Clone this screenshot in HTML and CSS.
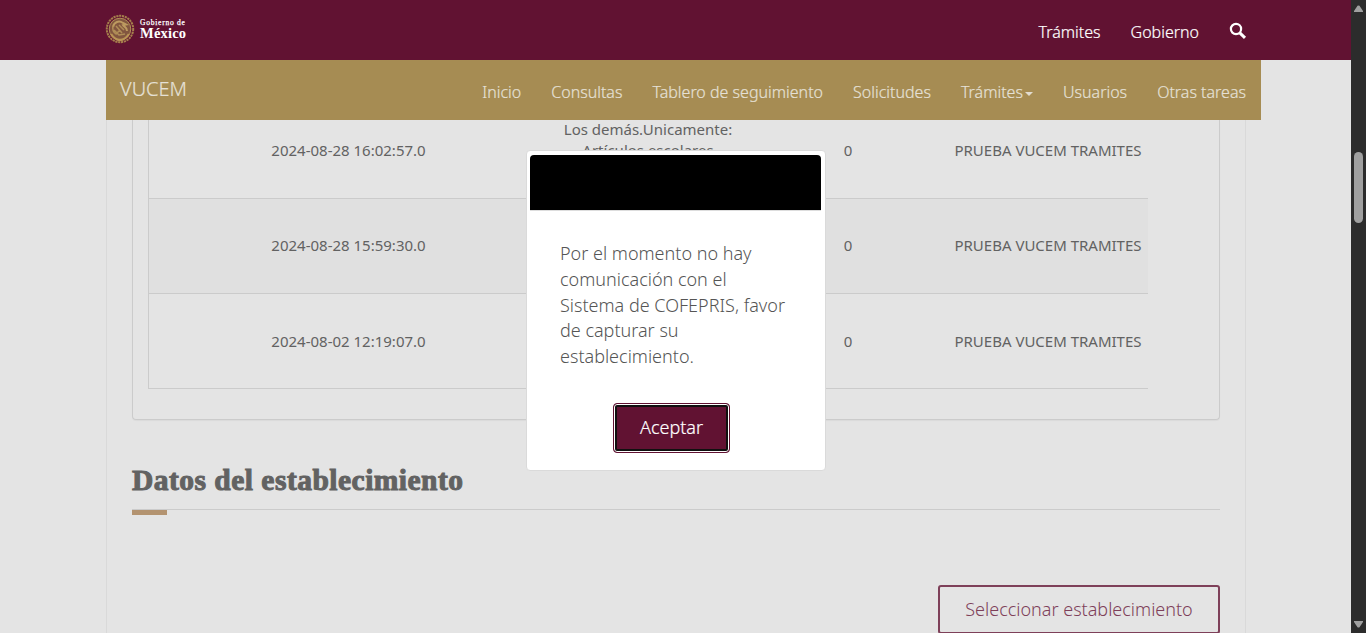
FILE: index.html
```html
<!DOCTYPE html>
<html lang="es">
<head>
<meta charset="utf-8">
<title>VUCEM</title>
<link rel="stylesheet" href="styles.css">
</head>
<body>
<div class="page">
  <header class="gov-bar">
    <a class="logo">
      <svg class="seal" viewBox="0 0 30 30" width="30" height="30" fill="none">
        <circle cx="15" cy="15" r="13.2" stroke="#a57f4c" stroke-width="2" stroke-dasharray="2.2 .7"/>
        <circle cx="15" cy="15" r="10.8" fill="#82563f" stroke="#b08d57" stroke-width="1"/>
        <path d="M8 13c1-5 6-7 10-4l3 1.500-3 .5c1 2 4 2 4 6" stroke="#bd9a60" stroke-width="2"/>
        <path d="M8 12c-1 4 0 6 3 8l4-4M11 12l6 7M14 11l5 5M9 16l5 5 6-1" stroke="#b08d57" stroke-width="1.500"/>
        <path d="M6 20c3 5 7 6 9 6s6-1 9-6" stroke="#b99456" stroke-width="2.400"/>
      </svg>
      <span class="logo-text"><span class="logo-small">Gobierno de</span><span class="logo-big">México</span></span>
    </a>
    <nav class="gov-links">
      <a class="g1">Trámites</a>
      <a class="g2">Gobierno</a>
      <svg class="search" width="18" height="18" viewBox="0 0 18 18" fill="none" stroke="#fff"><circle cx="7" cy="7" r="5.1" stroke-width="2.2"/><path d="M10.8 10.8l5.2 5" stroke-width="3"/></svg>
    </nav>
  </header>
  <div class="sub-bar">
    <a class="brand">VUCEM</a>
    <nav class="menu">
      <a>Inicio</a><a>Consultas</a><a>Tablero de seguimiento</a><a>Solicitudes</a><a class="drop">Trámites<i class="caret"></i></a><a>Usuarios</a><a>Otras tareas</a>
    </nav>
  </div>
  <main class="content">
    <section class="panel">
      <div class="table">
        <div class="row"><span>2024-08-28 16:02:57.0</span><span class="desc">Los demás.Unicamente:<br>Artículos escolares</span><span>0</span><span>PRUEBA VUCEM TRAMITES</span></div>
        <div class="row alt"><span>2024-08-28 15:59:30.0</span><span></span><span>0</span><span>PRUEBA VUCEM TRAMITES</span></div>
        <div class="row"><span>2024-08-02 12:19:07.0</span><span></span><span>0</span><span>PRUEBA VUCEM TRAMITES</span></div>
      </div>
    </section>
    <h3 class="title">Datos del establecimiento</h3>
    <div class="actions"><button class="btn-outline">Seleccionar establecimiento</button></div>
  </main>
</div>
<div class="scrollbar">
  <svg width="9" height="7" viewBox="0 0 9 7"><path d="M3.500.8Q4.500 0 5.500.8L9 6V7H0V6Z" fill="#a0a0a0"/></svg>
  <div class="thumb"></div>
  <svg class="down" width="9" height="7" viewBox="0 0 9 7"><path d="M3.500 6.200Q4.500 7 5.500 6.200L9 1V0H0V1Z" fill="#a0a0a0"/></svg>
</div>
<div class="modal">
  <div class="modal-head"></div>
  <p class="modal-text">Por el momento no hay<br>comunicación con el<br>Sistema de COFEPRIS, favor<br>de capturar su<br>establecimiento.</p>
  <button class="btn-primary">Aceptar</button>
</div>
</body>
</html>
```

FILE: styles.css
```css
* { box-sizing: border-box; }
body {
  margin: 0;
  width: 1366px;
  height: 633px;
  display: flex;
  overflow: hidden;
  background: #e4e4e4;
  font-family: "Noto Sans", sans-serif;
  color: #626262;
}
.page { width: 1351px; height: 633px; display: flex; flex-direction: column; overflow: hidden; }
.gov-bar {
  height: 60px;
  flex: none;
  background: #611232;
  display: flex;
  justify-content: space-between;
  padding: 0 104px 0 105px;
  color: #fff;
}
.logo { display: flex; padding-top: 14px; }
.logo-text { display: flex; flex-direction: column; padding: 5px 0 0 5px; font-family: "Liberation Serif", serif; font-weight: 700; }
.logo-small { font-size: 7.5px; line-height: 8px; letter-spacing: .76px; font-weight: 400; -webkit-text-stroke: .25px; }
.logo-big { font-size: 14.5px; line-height: 13px; letter-spacing: .2px; }
.gov-links { display: flex; font-size: 16px; line-height: 22px; padding-top: 21px; font-weight: 300; -webkit-text-stroke: .2px; }
.g2 { margin-left: 30px; }
.search { margin: 1px 0 0 30px; }
.sub-bar {
  width: 1155px;
  height: 60px;
  flex: none;
  margin-left: 106px;
  padding: 0 15px 0 14px;
  background: #a68c53;
  color: #e5e0d6;
  display: flex;
  justify-content: space-between;
}
.brand { font-size: 20px; line-height: 28px; padding-top: 15px; font-weight: 300; -webkit-text-stroke: .2px; }
.menu { display: flex; align-items: flex-start; gap: 30px; font-size: 16px; line-height: 22px; padding-top: 21px; font-weight: 300; white-space: nowrap; -webkit-text-stroke: .2px; }
.drop { display: flex; align-items: center; }
.caret { margin: 4px 0 0 2px; border: 4px solid transparent; border-top-color: #e2dccf; border-bottom: 0; }
.content {
  width: 1140px;
  flex: 1;
  margin-left: 106px;
  padding: 0 25px;
  border: solid #d9d9d9;
  border-width: 0 1px;
  overflow: hidden;
}
.panel {
  height: 300px;
  border: 1px solid #cbcbcb;
  border-top: 0;
  border-radius: 0 0 4px 4px;
  padding-left: 15px;
  box-shadow: 0 1px 1px rgba(0, 0, 0, .04);
  overflow: hidden;
}
.table { width: 1000px; margin-top: -17px; border-left: 1px solid #cbcbcb; }
.row {
  height: 95px;
  display: grid;
  grid-template-columns: 399px 200px 200px 200px;
  align-items: center;
  text-align: center;
  border-bottom: 1px solid #cbcbcb;
  font-size: 15px;
  line-height: 21px;
}
.row:first-child { height: 96px; }
.alt { background: #e0e0e0; padding-bottom: 1px; }
.desc { padding-bottom: 21px; }
.title {
  height: 46px;
  margin: 44px 0 0;
  border-bottom: 1px solid #cbcbcb;
  font: 700 29.5px/32px "Liberation Serif", serif;
  letter-spacing: .48px;
  -webkit-text-stroke: 1px #626262;
  color: #626262;
}
.title::after { content: ""; display: block; width: 35px; height: 5px; margin-top: 14px; background: #b39370; }
.actions { display: flex; justify-content: flex-end; padding-top: 75px; }
.btn-outline {
  width: 282px;
  height: 49px;
  padding: 0 0 2px;
  border: 2px solid #7e4059;
  border-radius: 3px;
  background: transparent;
  color: #7e4059;
  font: 300 18px/26px "Noto Sans", sans-serif;
}
.scrollbar { width: 15px; background: #2c2c2c; display: flex; flex-direction: column; align-items: center; padding: 5px 0; }
.thumb { width: 9px; height: 71px; margin-top: 140px; border-radius: 5px; background: #a0a0a0; }
.down { margin-top: auto; }
.modal {
  position: absolute;
  left: 526px;
  top: 150px;
  width: 300px;
  height: 321px;
  padding: 4px 3px 0;
  background: #fff;
  border: 1px solid #dadada;
  border-radius: 4px;
  display: flex;
  flex-direction: column;
}
.modal-head { width: 291px; height: 55px; background: #000; border-radius: 4px 4px 0 0; box-shadow: 0 1px #ddd; }
.modal-text { margin: 31.3px 0 0 30px; font-size: 18px; line-height: 25.71px; font-weight: 300; color: #555; white-space: nowrap; }
.btn-primary {
  width: 117px;
  height: 50px;
  margin: 32.7px 0 0 83px;
  padding: 0 0 2px;
  border: 1px solid #611232;
  border-radius: 4px;
  background: #611232;
  box-shadow: inset 0 0 0 1px #fff, inset 0 0 0 3px #101010;
  color: #fff;
  font: 300 18px/26px "Noto Sans", sans-serif;
  -webkit-text-stroke: .2px;
}
```
